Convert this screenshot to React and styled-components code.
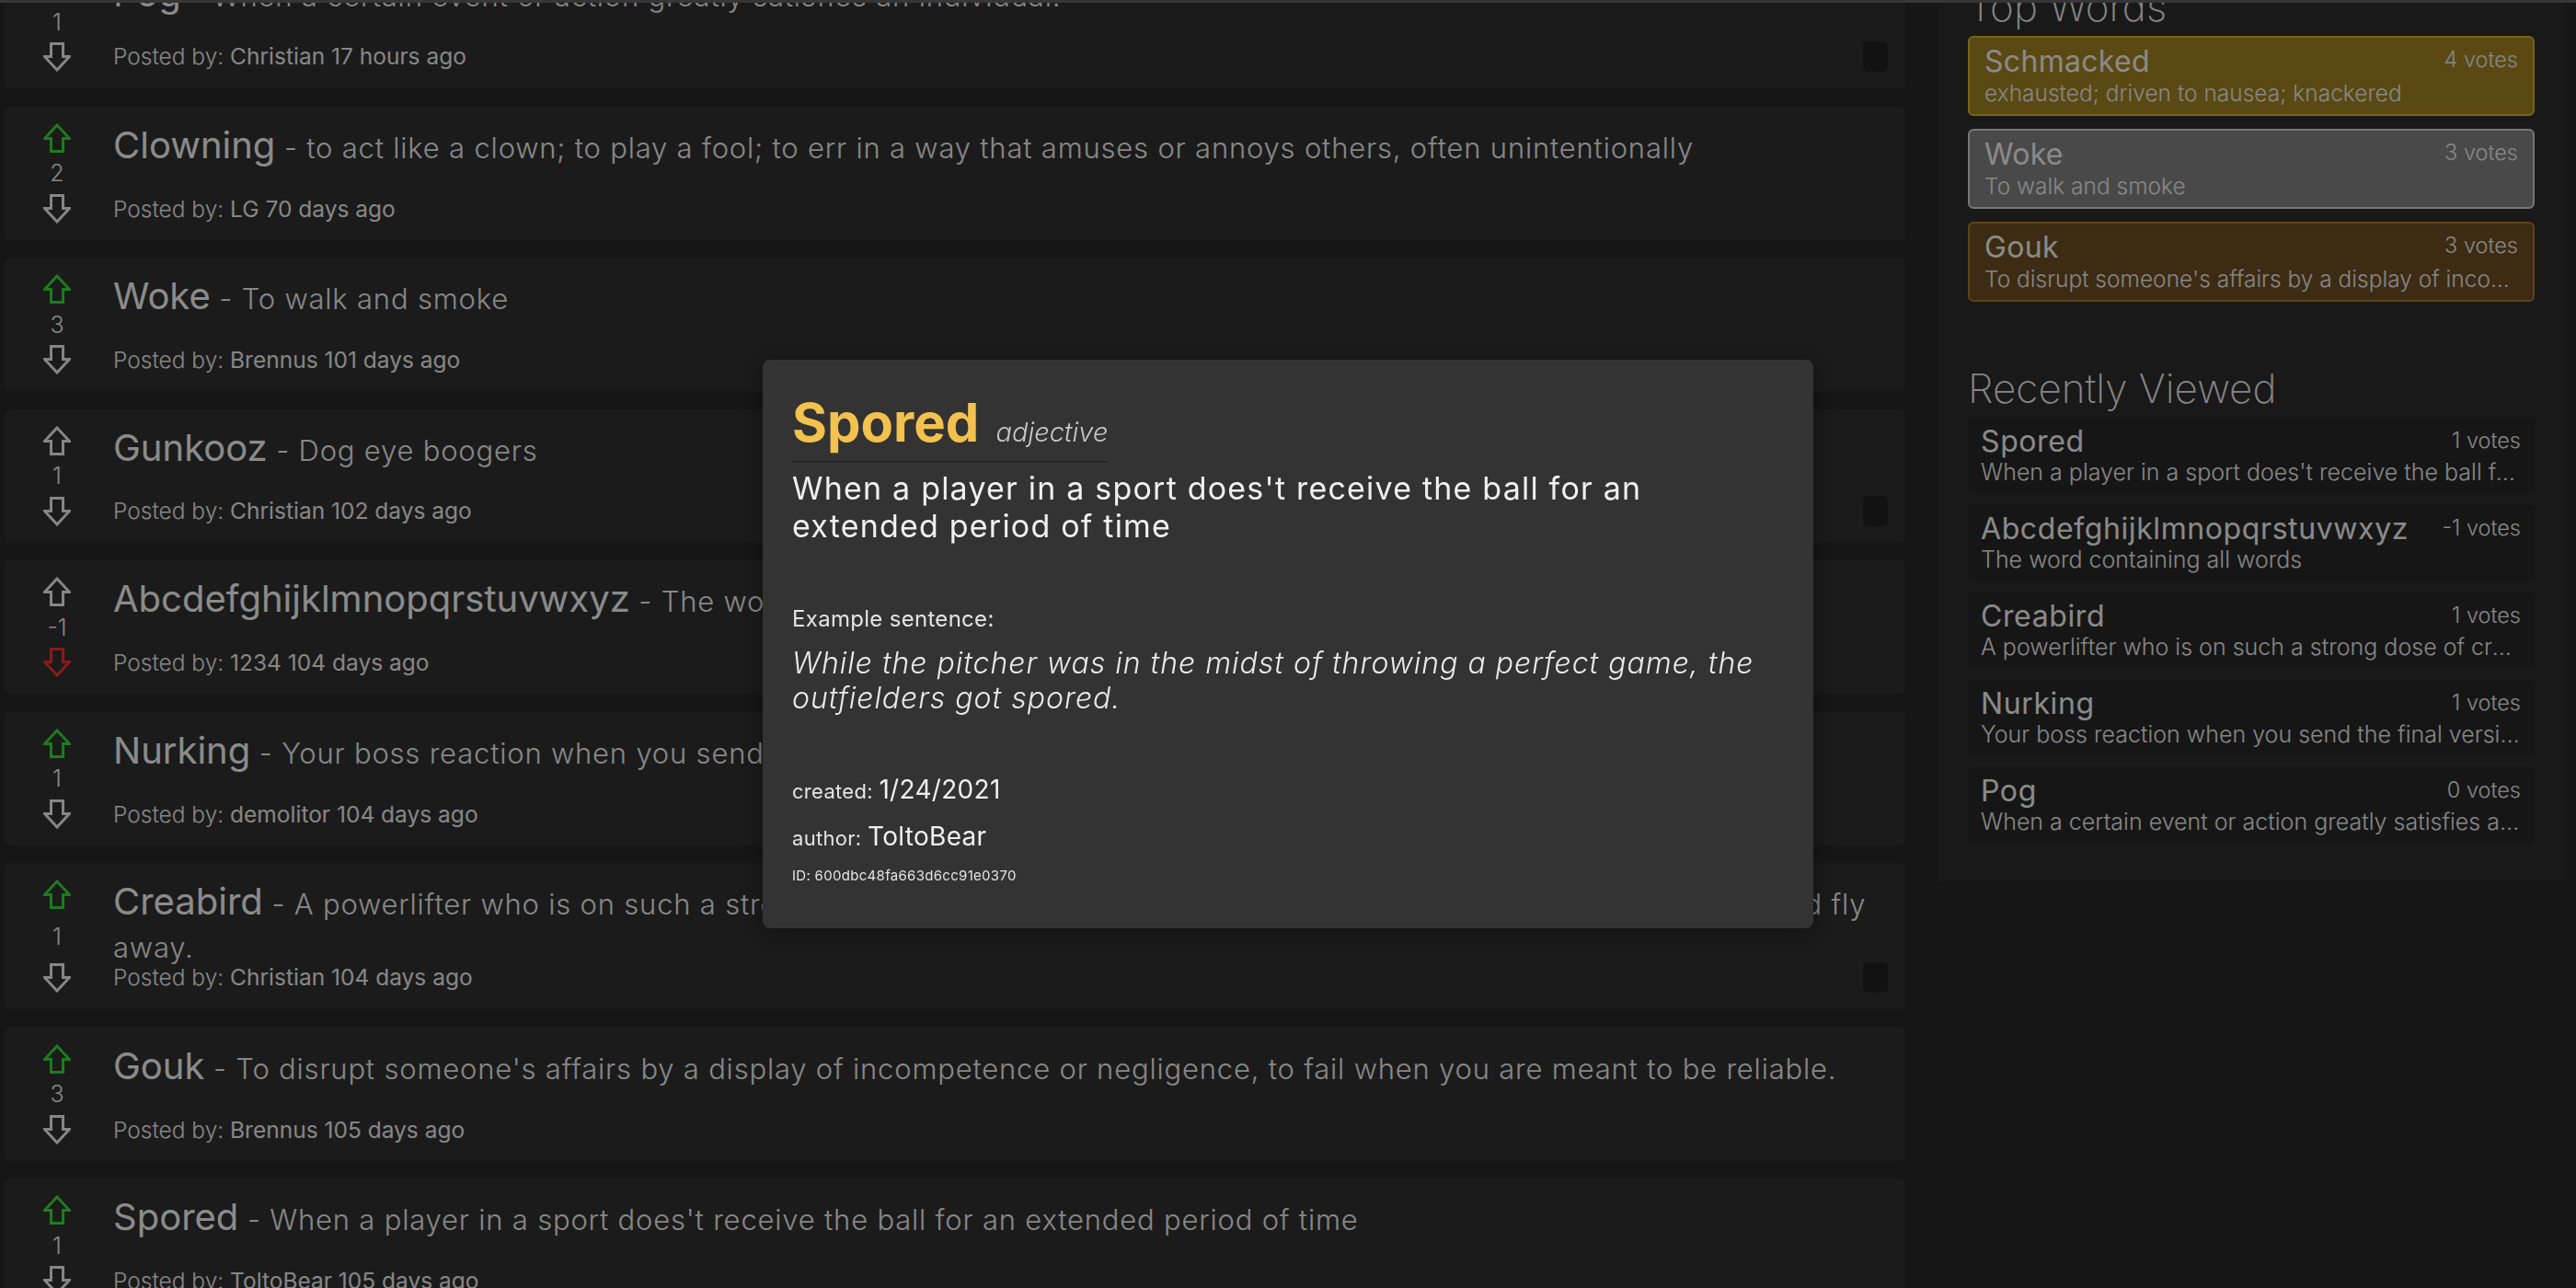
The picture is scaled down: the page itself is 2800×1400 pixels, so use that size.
import React from "react";
import styled, { createGlobalStyle } from "styled-components";

const GlobalStyle = createGlobalStyle`
  html, body {
    margin: 0;
    padding: 0;
  }
  body {
    background: #252525;
    font-family: Inter, "Open Sans", "DejaVu Sans", sans-serif;
    color: #e6e6e6;
    overflow: hidden;
  }
`;

const TopEdge = styled.div`
  position: fixed;
  top: 0;
  left: 0;
  right: 0;
  height: 3px;
  background: #5a5a5a;
  z-index: 2;
`;

const Page = styled.div`
  display: flex;
  align-items: flex-start;
  gap: 36px;
  padding: 0 13px 0 5px;
  margin-top: -49px;
`;

const Feed = styled.div`
  flex: 1;
  display: flex;
  flex-direction: column;
  gap: 19.5px;
`;

const Card = styled.div`
  display: flex;
  gap: 41px;
  padding: 18px 8px 18px 37px;
  background: #2d2d2d;
  border-radius: 5px;
`;

const VoteCol = styled.div`
  width: 40px;
  flex-shrink: 0;
  display: flex;
  flex-direction: column;
  align-items: center;
  justify-content: space-between;
`;

const Arrow = styled.svg`
  display: block;
  width: 30px;
  height: 32px;
`;

const Count = styled.div`
  font-size: 25px;
  font-weight: 300;
  line-height: 30px;
  color: #e0e0e0;
`;

const Body = styled.div`
  flex: 1;
  min-height: 109px;
  display: flex;
  flex-direction: column;
  justify-content: space-between;
`;

const Title = styled.div`
  font-size: 31px;
  font-weight: 300;
  letter-spacing: 0.8px;
  line-height: 47px;
  color: #e2e2e2;
`;

const Word = styled.span`
  font-size: 40px;
  font-weight: 400;
  letter-spacing: 0;
  color: #e8e8e8;
`;

const PostedRow = styled.div`
  display: flex;
  align-items: center;
  justify-content: space-between;
  margin-top: -7px;
`;

const Posted = styled.div`
  font-size: 24.5px;
  line-height: 31px;
  color: #e0e0e0;
`;

const Label = styled.span`
  font-weight: 300;
`;

const DeleteButton = styled.div`
  width: 27px;
  height: 33px;
  margin-right: 11px;
  border-radius: 5px;
  background: #1f1f1f;
`;

const Sidebar = styled.aside`
  width: 680px;
  flex-shrink: 0;
  box-sizing: border-box;
  margin-top: 6px;
  padding: 24px 32px 42px;
  background: #2b2b2b;
  display: flex;
  flex-direction: column;
  gap: 68px;
`;

const Section = styled.section`
  display: flex;
  flex-direction: column;
`;

const Heading = styled.h2`
  margin: 0 0 5px;
  font-size: 44px;
  font-weight: 200;
  line-height: 53px;
  color: #e0e0e0;
`;

const TierList = styled.div`
  display: flex;
  flex-direction: column;
  gap: 14px;
`;

const tiers = {
  gold: { bg: "#967b1e", border: "#cba821" },
  silver: { bg: "#7b7b7b", border: "#c5c5c5" },
  bronze: { bg: "#664921", border: "#9d7125" },
};

const TierCard = styled.div`
  padding: 7px 16px 8px;
  border: 2px solid ${(p) => tiers[p.tier].border};
  border-radius: 6px;
  background: ${(p) => tiers[p.tier].bg};
  min-width: 0;
`;

const RecentList = styled.div`
  display: flex;
  flex-direction: column;
  gap: 13px;
`;

const RecentItem = styled.div`
  padding: 8px 15px 8px 14px;
  border-radius: 5px;
  background: #262626;
  min-width: 0;
`;

const ItemHead = styled.div`
  display: flex;
  justify-content: space-between;
  align-items: flex-start;
  gap: 20px;
`;

const ItemName = styled.div`
  font-size: 32px;
  letter-spacing: ${(p) => (p.small ? "0.6px" : "0.3px")};
  line-height: ${(p) => (p.small ? "36px" : "38px")};
  color: #e6e6e6;
  white-space: nowrap;
`;

const ItemVotes = styled.div`
  margin-top: 6px;
  font-size: 23.5px;
  font-weight: 300;
  line-height: 22px;
  color: #e0e0e0;
  white-space: nowrap;
`;

const ItemDesc = styled.div`
  font-size: ${(p) => (p.small ? "25px" : "24.5px")};
  font-weight: 300;
  line-height: 30px;
  color: #e0e0e0;
  white-space: nowrap;
  overflow: hidden;
  text-overflow: ellipsis;
`;

const Backdrop = styled.div`
  position: fixed;
  inset: 0;
  z-index: 5;
  background: rgba(0, 0, 0, 0.4);
  display: flex;
  align-items: center;
  justify-content: center;
`;

const Modal = styled.div`
  width: 1142px;
  box-sizing: border-box;
  padding: 33px 32px 48px;
  background: #333333;
  border-radius: 8px;
  box-shadow: 0 4px 24px rgba(0, 0, 0, 0.35);
`;

const ModalHead = styled.div`
  display: inline-block;
  padding-bottom: 7px;
  border-bottom: 2px solid #262626;
`;

const ModalWord = styled.span`
  font-size: 58px;
  font-weight: 700;
  color: #f2c14e;
`;

const Kind = styled.span`
  margin-left: 18px;
  font-size: 29px;
  font-weight: 300;
  font-style: italic;
  color: #c8c8c8;
`;

const Definition = styled.p`
  margin: 7px 0 0;
  max-width: 1000px;
  font-size: 34px;
  letter-spacing: 1.2px;
  line-height: 41px;
  color: #f0f0f0;
`;

const SmallLabel = styled.div`
  margin-top: ${(p) => p.gap || 0}px;
  font-size: ${(p) => p.size || 24}px;
  letter-spacing: 0.3px;
  color: #e4e4e4;
`;

const Example = styled.p`
  margin: 15px 0 0;
  font-size: 32px;
  font-weight: 300;
  font-style: italic;
  letter-spacing: 1px;
  line-height: 38px;
  color: #eaeaea;
`;

const Value = styled.span`
  font-size: 28px;
  color: #f0f0f0;
`;

const feed = [
  { word: "Pog", def: "When a certain event or action greatly satisfies an individual.", votes: 1, by: "Christian", ago: "17 hours ago", own: true },
  { word: "Clowning", def: "to act like a clown; to play a fool; to err in a way that amuses or annoys others, often unintentionally", votes: 2, vote: "up", by: "LG", ago: "70 days ago" },
  { word: "Woke", def: "To walk and smoke", votes: 3, vote: "up", by: "Brennus", ago: "101 days ago" },
  { word: "Gunkooz", def: "Dog eye boogers", votes: 1, by: "Christian", ago: "102 days ago", own: true },
  { word: "Abcdefghijklmnopqrstuvwxyz", def: "The word containing all words", votes: -1, vote: "down", by: "1234", ago: "104 days ago" },
  { word: "Nurking", def: "Your boss reaction when you send the final version of the project", votes: 1, vote: "up", by: "demolitor", ago: "104 days ago" },
  { word: "Creabird", def: "A powerlifter who is on such a strong dose of creatine that they feel like they could sprout a pair of wings and fly away.", votes: 1, vote: "up", by: "Christian", ago: "104 days ago", own: true },
  { word: "Gouk", def: "To disrupt someone's affairs by a display of incompetence or negligence, to fail when you are meant to be reliable.", votes: 3, vote: "up", by: "Brennus", ago: "105 days ago" },
  { word: "Spored", def: "When a player in a sport does't receive the ball for an extended period of time", votes: 1, vote: "up", by: "ToltoBear", ago: "105 days ago" },
];

const topWords = [
  { word: "Schmacked", def: "exhausted; driven to nausea; knackered", votes: 4, tier: "gold" },
  { word: "Woke", def: "To walk and smoke", votes: 3, tier: "silver" },
  { word: "Gouk", def: "To disrupt someone's affairs by a display of incompetence or negligence, to fail when you are meant to be reliable.", votes: 3, tier: "bronze" },
];

const recent = [
  { word: "Spored", def: "When a player in a sport does't receive the ball for an extended period of time", votes: 1 },
  { word: "Abcdefghijklmnopqrstuvwxyz", def: "The word containing all words", votes: -1 },
  { word: "Creabird", def: "A powerlifter who is on such a strong dose of creatine that they feel like they could sprout a pair of wings and fly away.", votes: 1 },
  { word: "Nurking", def: "Your boss reaction when you send the final version of the project", votes: 1 },
  { word: "Pog", def: "When a certain event or action greatly satisfies an individual.", votes: 0 },
];

const NEUTRAL = "#e0e0e0";

const VoteArrow = ({ dir, color }) => (
  <Arrow viewBox="0 0 30 32">
    <path
      d={
        dir === "up"
          ? "M15 2 L28.5 16.5 H21.5 V30.5 H8.5 V16.5 H1.5 Z"
          : "M15 30 L28.5 15.5 H21.5 V1.5 H8.5 V15.5 H1.5 Z"
      }
      fill="none"
      stroke={color}
      strokeWidth="3"
    />
  </Arrow>
);

const FeedCard = ({ item }) => (
  <Card>
    <VoteCol>
      <VoteArrow dir="up" color={item.vote === "up" ? "#32cd32" : NEUTRAL} />
      <Count>{item.votes}</Count>
      <VoteArrow dir="down" color={item.vote === "down" ? "#e62e2e" : NEUTRAL} />
    </VoteCol>
    <Body>
      <Title>
        <Word>{item.word}</Word> - {item.def}
      </Title>
      <PostedRow>
        <Posted>
          <Label>Posted by: </Label>
          {item.by} {item.ago}
        </Posted>
        {item.own && <DeleteButton />}
      </PostedRow>
    </Body>
  </Card>
);

const App = () => {
  return (
    <>
      <GlobalStyle />
      <TopEdge />
      <Page>
        <Feed>
          {feed.map((item) => (
            <FeedCard key={item.word} item={item} />
          ))}
        </Feed>
        <Sidebar>
          <Section>
            <Heading>Top Words</Heading>
            <TierList>
              {topWords.map((w) => (
                <TierCard key={w.word} tier={w.tier}>
                  <ItemHead>
                    <ItemName>{w.word}</ItemName>
                    <ItemVotes>{w.votes} votes</ItemVotes>
                  </ItemHead>
                  <ItemDesc>{w.def}</ItemDesc>
                </TierCard>
              ))}
            </TierList>
          </Section>
          <Section>
            <Heading>Recently Viewed</Heading>
            <RecentList>
              {recent.map((w) => (
                <RecentItem key={w.word}>
                  <ItemHead>
                    <ItemName small>{w.word}</ItemName>
                    <ItemVotes>{w.votes} votes</ItemVotes>
                  </ItemHead>
                  <ItemDesc small>{w.def}</ItemDesc>
                </RecentItem>
              ))}
            </RecentList>
          </Section>
        </Sidebar>
      </Page>
      <Backdrop>
        <Modal>
          <ModalHead>
            <ModalWord>Spored</ModalWord>
            <Kind>adjective</Kind>
          </ModalHead>
          <Definition>
            When a player in a sport does't receive the ball for an extended period of time
          </Definition>
          <SmallLabel gap={66}>Example sentence:</SmallLabel>
          <Example>
            While the pitcher was in the midst of throwing a perfect game, the outfielders got spored.
          </Example>
          <SmallLabel gap={63} size={22}>
            created: <Value>1/24/2021</Value>
          </SmallLabel>
          <SmallLabel gap={17} size={22}>
            author: <Value>ToltoBear</Value>
          </SmallLabel>
          <SmallLabel gap={16} size={15}>
            ID: 600dbc48fa663d6cc91e0370
          </SmallLabel>
        </Modal>
      </Backdrop>
    </>
  );
};

export default App;
